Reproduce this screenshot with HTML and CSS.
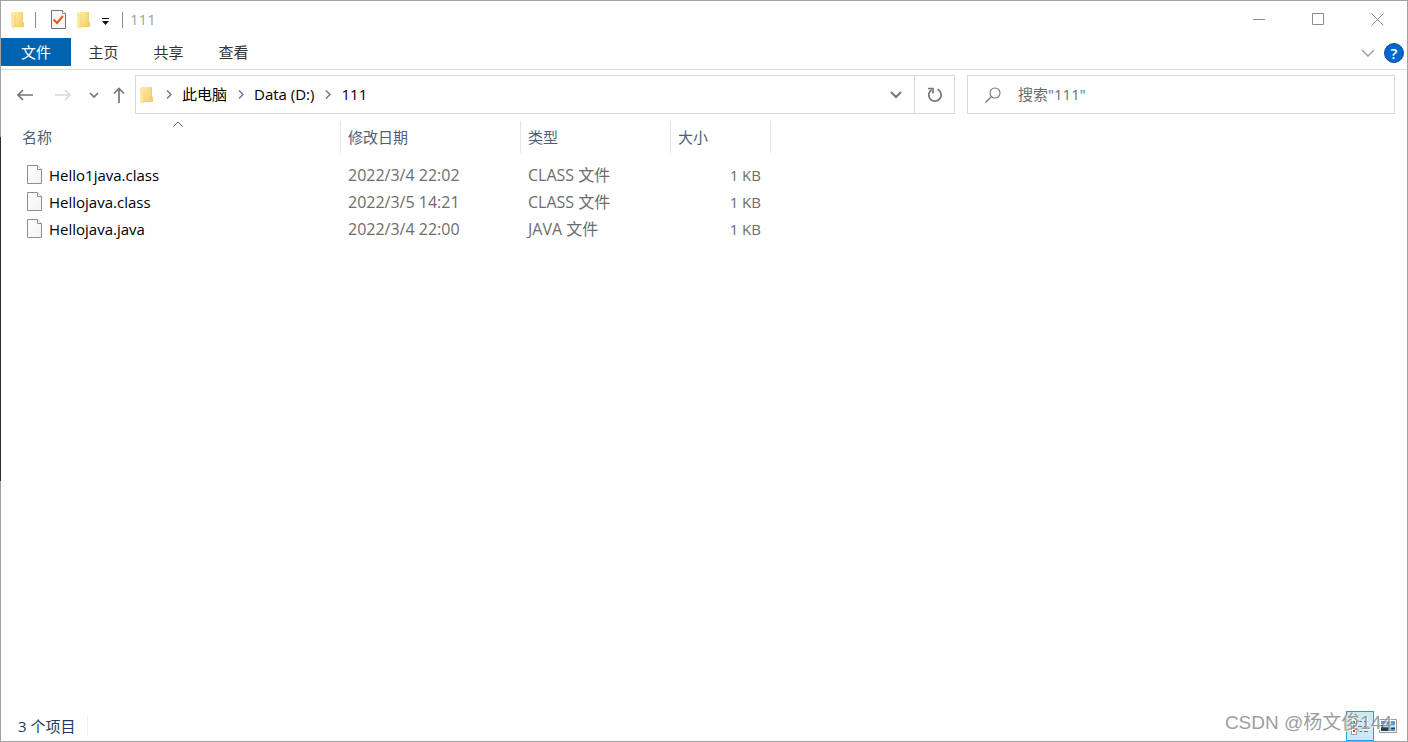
FILE: index.html
```html
<!DOCTYPE html>
<html lang="zh-CN">
<head>
<meta charset="utf-8">
<title>111</title>
<link rel="stylesheet" href="styles.css">
</head>
<body>
<svg class="defs" width="0" height="0" aria-hidden="true">
  <defs>
    <linearGradient id="gold" x1="0" x2="1" y1="0" y2="1"><stop offset="0" stop-color="#ffe9a5"/><stop offset="1" stop-color="#f5cf68"/></linearGradient>
    <linearGradient id="sheet" x1="0" x2="1" y1="0" y2="1"><stop offset="0" stop-color="#ffffff"/><stop offset="1" stop-color="#f1f3f4"/></linearGradient>
    <symbol id="folder" viewBox="0 0 13 18">
      <path d="M3 1h9v10h1v5H3z" fill="#f3ce6c"/>
      <path d="M4 1h7v14H4z" fill="url(#gold)"/>
      <path d="M0 1l4 1v13l-1 3-3-2z" fill="#ffe7a0"/>
      <path d="M4 4v11l-1 2" fill="none" stroke="#f0c860" stroke-width=".6"/>
    </symbol>
    <symbol id="page" viewBox="0 0 15 19">
      <path d="M.5.5h10l4 4v14H.5z" fill="url(#sheet)" stroke="#8d9092"/>
      <path d="M10.500.5v4h4" fill="#fff" stroke="#8d9092"/>
    </symbol>
  </defs>
</svg>
<div class="window">
  <header class="titlebar">
    <svg class="folder" width="13" height="18"><use href="#folder"/></svg>
    <span class="bar bar-first"></span>
    <button class="quick check" aria-label="属性">
      <svg width="15" height="19" viewBox="0 0 15 19"><path d="M.5.5h11l3 3v15H.5z" fill="#f5f6f7" stroke="#707375"/><path d="M11.500.5v3h3" fill="#fff" stroke="#8d9092"/><path d="M2.500 9.500l3.500 3.500 6-7" fill="none" stroke="#ea5719" stroke-width="2"/></svg>
    </button>
    <button class="quick" aria-label="新建文件夹"><svg width="13" height="18"><use href="#folder"/></svg></button>
    <button class="quick drop" aria-label="自定义快速访问工具栏"><svg width="7" height="7" viewBox="0 0 7 7"><path d="M0 0h7v1H0zM0 3h7L3.500 7z" fill="#111"/></svg></button>
    <span class="bar"></span>
    <span class="title">111</span>
    <div class="controls">
      <button aria-label="最小化"><svg width="13" height="13" viewBox="0 0 13 13"><path d="M0 6.500h12" stroke="#8d8d8d"/></svg></button>
      <button aria-label="最大化"><svg width="13" height="13" viewBox="0 0 13 13"><path d="M.5.5h11v11H.5z" fill="none" stroke="#8d8d8d"/></svg></button>
      <button aria-label="关闭"><svg width="13" height="13" viewBox="0 0 13 13"><path d="M.5.5l12 12M12.500.5l-12 12" stroke="#8d8d8d"/></svg></button>
    </div>
  </header>
  <nav class="tabs">
    <button class="tab file">文件</button>
    <button class="tab">主页</button>
    <button class="tab">共享</button>
    <button class="tab">查看</button>
    <button class="expand" aria-label="展开功能区"><svg width="14" height="8" viewBox="0 0 14 8"><path d="M1 1l6 6 6-6" fill="none" stroke="#999" stroke-width="1.300"/></svg></button>
    <button class="help" aria-label="帮助">?</button>
  </nav>
  <div class="navbar">
    <div class="arrows">
      <button aria-label="后退"><svg width="16" height="12" viewBox="0 0 16 12"><path d="M16 6H1M6 1L1 6l5 5" fill="none" stroke="#777" stroke-width="1.700"/></svg></button>
      <button aria-label="前进"><svg width="16" height="12" viewBox="0 0 16 12"><path d="M0 6h15M10 1l5 5-5 5" fill="none" stroke="#d9d9d9" stroke-width="1.700"/></svg></button>
      <button aria-label="最近浏览的位置"><svg width="10" height="6" viewBox="0 0 10 6"><path d="M1 1l4 4 4-4" fill="none" stroke="#777" stroke-width="1.700"/></svg></button>
      <button aria-label="上移"><svg width="12" height="16" viewBox="0 0 12 16"><path d="M6 16V1.500M1 6.500l5-5 5 5" fill="none" stroke="#777" stroke-width="1.700"/></svg></button>
    </div>
    <div class="address">
      <svg class="crumb-folder" width="13" height="18"><use href="#folder"/></svg>
      <svg class="chev" width="6" height="9" viewBox="0 0 6 9"><path d="M1 .5l4 4-4 4" fill="none" stroke="#777" stroke-width="1.500"/></svg>
      <button class="crumb">此电脑</button>
      <svg class="chev" width="6" height="9" viewBox="0 0 6 9"><path d="M1 .5l4 4-4 4" fill="none" stroke="#777" stroke-width="1.500"/></svg>
      <button class="crumb">Data (D:)</button>
      <svg class="chev" width="6" height="9" viewBox="0 0 6 9"><path d="M1 .5l4 4-4 4" fill="none" stroke="#777" stroke-width="1.500"/></svg>
      <button class="crumb">111</button>
      <button class="history" aria-label="以前的位置"><svg width="12" height="8" viewBox="0 0 12 8"><path d="M1 1l5 5 5-5" fill="none" stroke="#777" stroke-width="2"/></svg></button>
      <button class="refresh" aria-label="刷新"><svg width="16" height="16" viewBox="0 0 16 16"><path d="M4.500 2.800A6.200 6.200 0 1 0 10.500 2.300" fill="none" stroke="#777" stroke-width="1.800"/><path d="M1 1.500h5v5" fill="none" stroke="#777" stroke-width="1.700"/></svg></button>
    </div>
    <label class="search">
      <svg width="16" height="16" viewBox="0 0 16 16"><circle cx="10" cy="6" r="5" fill="none" stroke="#777" stroke-width="1.100"/><path d="M6.500 9.500L.5 15.500" stroke="#777" stroke-width="1.200"/></svg>
      <input type="text" aria-label="搜索" placeholder='搜索"111"'>
    </label>
  </div>
  <main class="content">
    <table class="files">
      <colgroup><col class="c-name"><col class="c-date"><col class="c-type"><col class="c-size"></colgroup>
      <thead>
        <tr>
          <th>名称<svg class="sort" width="10" height="6" viewBox="0 0 10 6"><path d="M.5 5.500L5 1l4.500 4.500" fill="none" stroke="#666"/></svg></th>
          <th>修改日期</th><th>类型</th><th>大小</th>
        </tr>
      </thead>
      <tbody>
        <tr><td><span class="name"><svg width="15" height="19"><use href="#page"/></svg>Hello1java.class</span></td><td>2022/3/4 22:02</td><td>CLASS 文件</td><td>1 KB</td></tr>
        <tr><td><span class="name"><svg width="15" height="19"><use href="#page"/></svg>Hellojava.class</span></td><td>2022/3/5 14:21</td><td>CLASS 文件</td><td>1 KB</td></tr>
        <tr><td><span class="name"><svg width="15" height="19"><use href="#page"/></svg>Hellojava.java</span></td><td>2022/3/4 22:00</td><td>JAVA 文件</td><td>1 KB</td></tr>
      </tbody>
    </table>
  </main>
  <footer class="status">
    <span class="count">3 个项目</span>
    <div class="views">
      <button class="active" aria-label="详细信息"><svg width="18" height="17" viewBox="0 0 18 17"><path d="M.5.5h5v16h-5z" fill="#fff" stroke="#999"/><path d="M2 3h2v2H2z" fill="#3c79b5"/><path d="M2 7h2v2H2z" fill="#8b8b3a"/><path d="M2 12h2v2H2z" fill="#c33"/><path d="M7 3.500h4m2 0h4M7 8.500h4m2 0h4M7 13.500h4m2 0h4" stroke="#777"/></svg></button>
      <button aria-label="大图标"><svg width="18" height="14" viewBox="0 0 18 14"><path d="M.5.5h17v13H.5z" fill="#fff" stroke="#999"/><path d="M2 2h14v10H2z" fill="#5899df"/><path d="M2 5c4-1 8 2 14 1v2H2z" fill="#bfe0f5"/><path d="M2 6c3 0 4 2 7 2l7 1v3H2z" fill="#22414e"/><path d="M9 10h7v2H9z" fill="#4e91bc"/></svg></button>
    </div>
  </footer>
  <div class="watermark">CSDN @杨文俊144</div>
</div>
</body>
</html>
```
FILE: styles.css
```css
* { box-sizing: border-box; }
body {
  margin: 0;
  font: 15px/20px "Open Sans", "Noto Sans CJK SC", sans-serif;
  color: #1a1a1a;
  background: #fff;
}
button {
  display: flex;
  align-items: center;
  justify-content: center;
  margin: 0;
  padding: 0;
  border: 0;
  background: none;
  color: inherit;
  font: inherit;
}
svg { display: block; flex: none; }
.defs { position: absolute; }
.window {
  position: relative;
  display: flex;
  flex-direction: column;
  min-height: 100vh;
  border: 1px solid #a3a3a3;
}
/* darker stretch of the left window edge */
.window::before {
  content: "";
  position: absolute;
  top: 136px;
  left: -1px;
  width: 1px;
  height: 344px;
  background: #2d2d30;
}
.titlebar { display: flex; align-items: center; height: 37px; padding-left: 10px; }
.bar { width: 1px; height: 16px; background: #8c8c8c; }
.bar-first { margin: 0 15px 0 11px; }
.quick { margin-right: 11px; }
.quick.drop { margin: 3px 13px 0 1px; }
.title { margin-left: 7px; padding-bottom: 2px; color: #a0a0a0; }
.controls { display: flex; margin-left: auto; }
.controls button { width: 59px; height: 36px; }
.tabs { display: flex; align-items: flex-start; height: 32px; border-bottom: 1px solid #dadbdc; }
.tab { width: 65px; height: 28px; color: #333; }
.tab.file { width: 70px; background: #0063b1; color: #fff; }
.expand { width: 30px; height: 30px; margin-left: auto; }
.help {
  width: 20px;
  height: 20px;
  margin: 5px 3px 0 1px;
  border: 1px solid #16508c;
  border-radius: 50%;
  background: #0067cf;
  color: #fff;
  font-weight: 600;
}
.navbar {
  display: grid;
  grid-template-columns: 134px minmax(0, 832fr) minmax(0, 428fr);
  height: 51px;
  padding: 5px 12px 7px 0;
}
.arrows { display: flex; align-items: center; padding-left: 16px; }
.arrows button { margin-right: 22px; }
.arrows button:nth-child(3) { margin: 0 14px 0 -4px; }
.arrows button:last-child { margin: 0; }
.address {
  display: flex;
  align-items: center;
  margin-right: 12px;
  padding-left: 4px;
  border: 1px solid #d9d9d9;
  color: #000;
}
.crumb { padding-bottom: 2px; }
.chev { margin: 0 10px 0 11px; }
.crumb-folder { margin-right: 2px; }
.history { width: 36px; height: 37px; margin-left: auto; }
.refresh { width: 40px; height: 37px; border-left: 1px solid #d9d9d9; }
.search {
  display: flex;
  align-items: center;
  padding-left: 17px;
  border: 1px solid #d9d9d9;
}
.search input {
  flex: 1;
  min-width: 0;
  margin-left: 17px;
  padding: 0 0 2px;
  border: 0;
  outline: 0;
  background: none;
  font: inherit;
}
.search input::placeholder { color: #6d6d6d; opacity: 1; }
.content { flex: 1; }
.files { width: 770px; table-layout: fixed; border-collapse: separate; border-spacing: 0; }
.c-name { width: 340px; }
.c-date { width: 180px; }
.c-type { width: 150px; }
.c-size { width: 100px; }
.files th {
  position: relative;
  height: 32px;
  padding: 0 7px;
  border-right: 1px solid #e5e5e5;
  color: #4c607a;
  font-weight: 400;
  text-align: left;
}
.files th:first-child { padding-left: 21px; }
.sort { position: absolute; top: 0; left: 50%; margin-left: 2px; }
.files tbody::before { content: ""; display: block; height: 8px; }
.files td { height: 27px; padding: 0 7px; color: #6d6d6d; font-size: 16px; }
.files td:first-child { padding-left: 26px; color: #000; font-size: 15px; }
.files td:last-child { padding-right: 10px; font-size: 15px; text-align: right; }
.name { display: flex; align-items: center; gap: 7px; }
.status { display: flex; align-items: center; height: 30px; padding-left: 17px; color: #1e395b; }
.count { padding-right: 12px; border-right: 1px solid #f0f0f0; }
.views { display: flex; margin-left: auto; padding-right: 6px; }
.views button { width: 27px; height: 30px; }
.views .active { width: 28px; border: 1px solid #26a0da; background: #cbe8f6; }
.watermark {
  position: absolute;
  right: 15px;
  bottom: 6px;
  color: #8c8c8cdd;
  font: 19px/24px "Liberation Sans", "Noto Sans CJK SC", sans-serif;
  text-shadow: 1px 1px 0 #ffffffcc;
  pointer-events: none;
}
```
